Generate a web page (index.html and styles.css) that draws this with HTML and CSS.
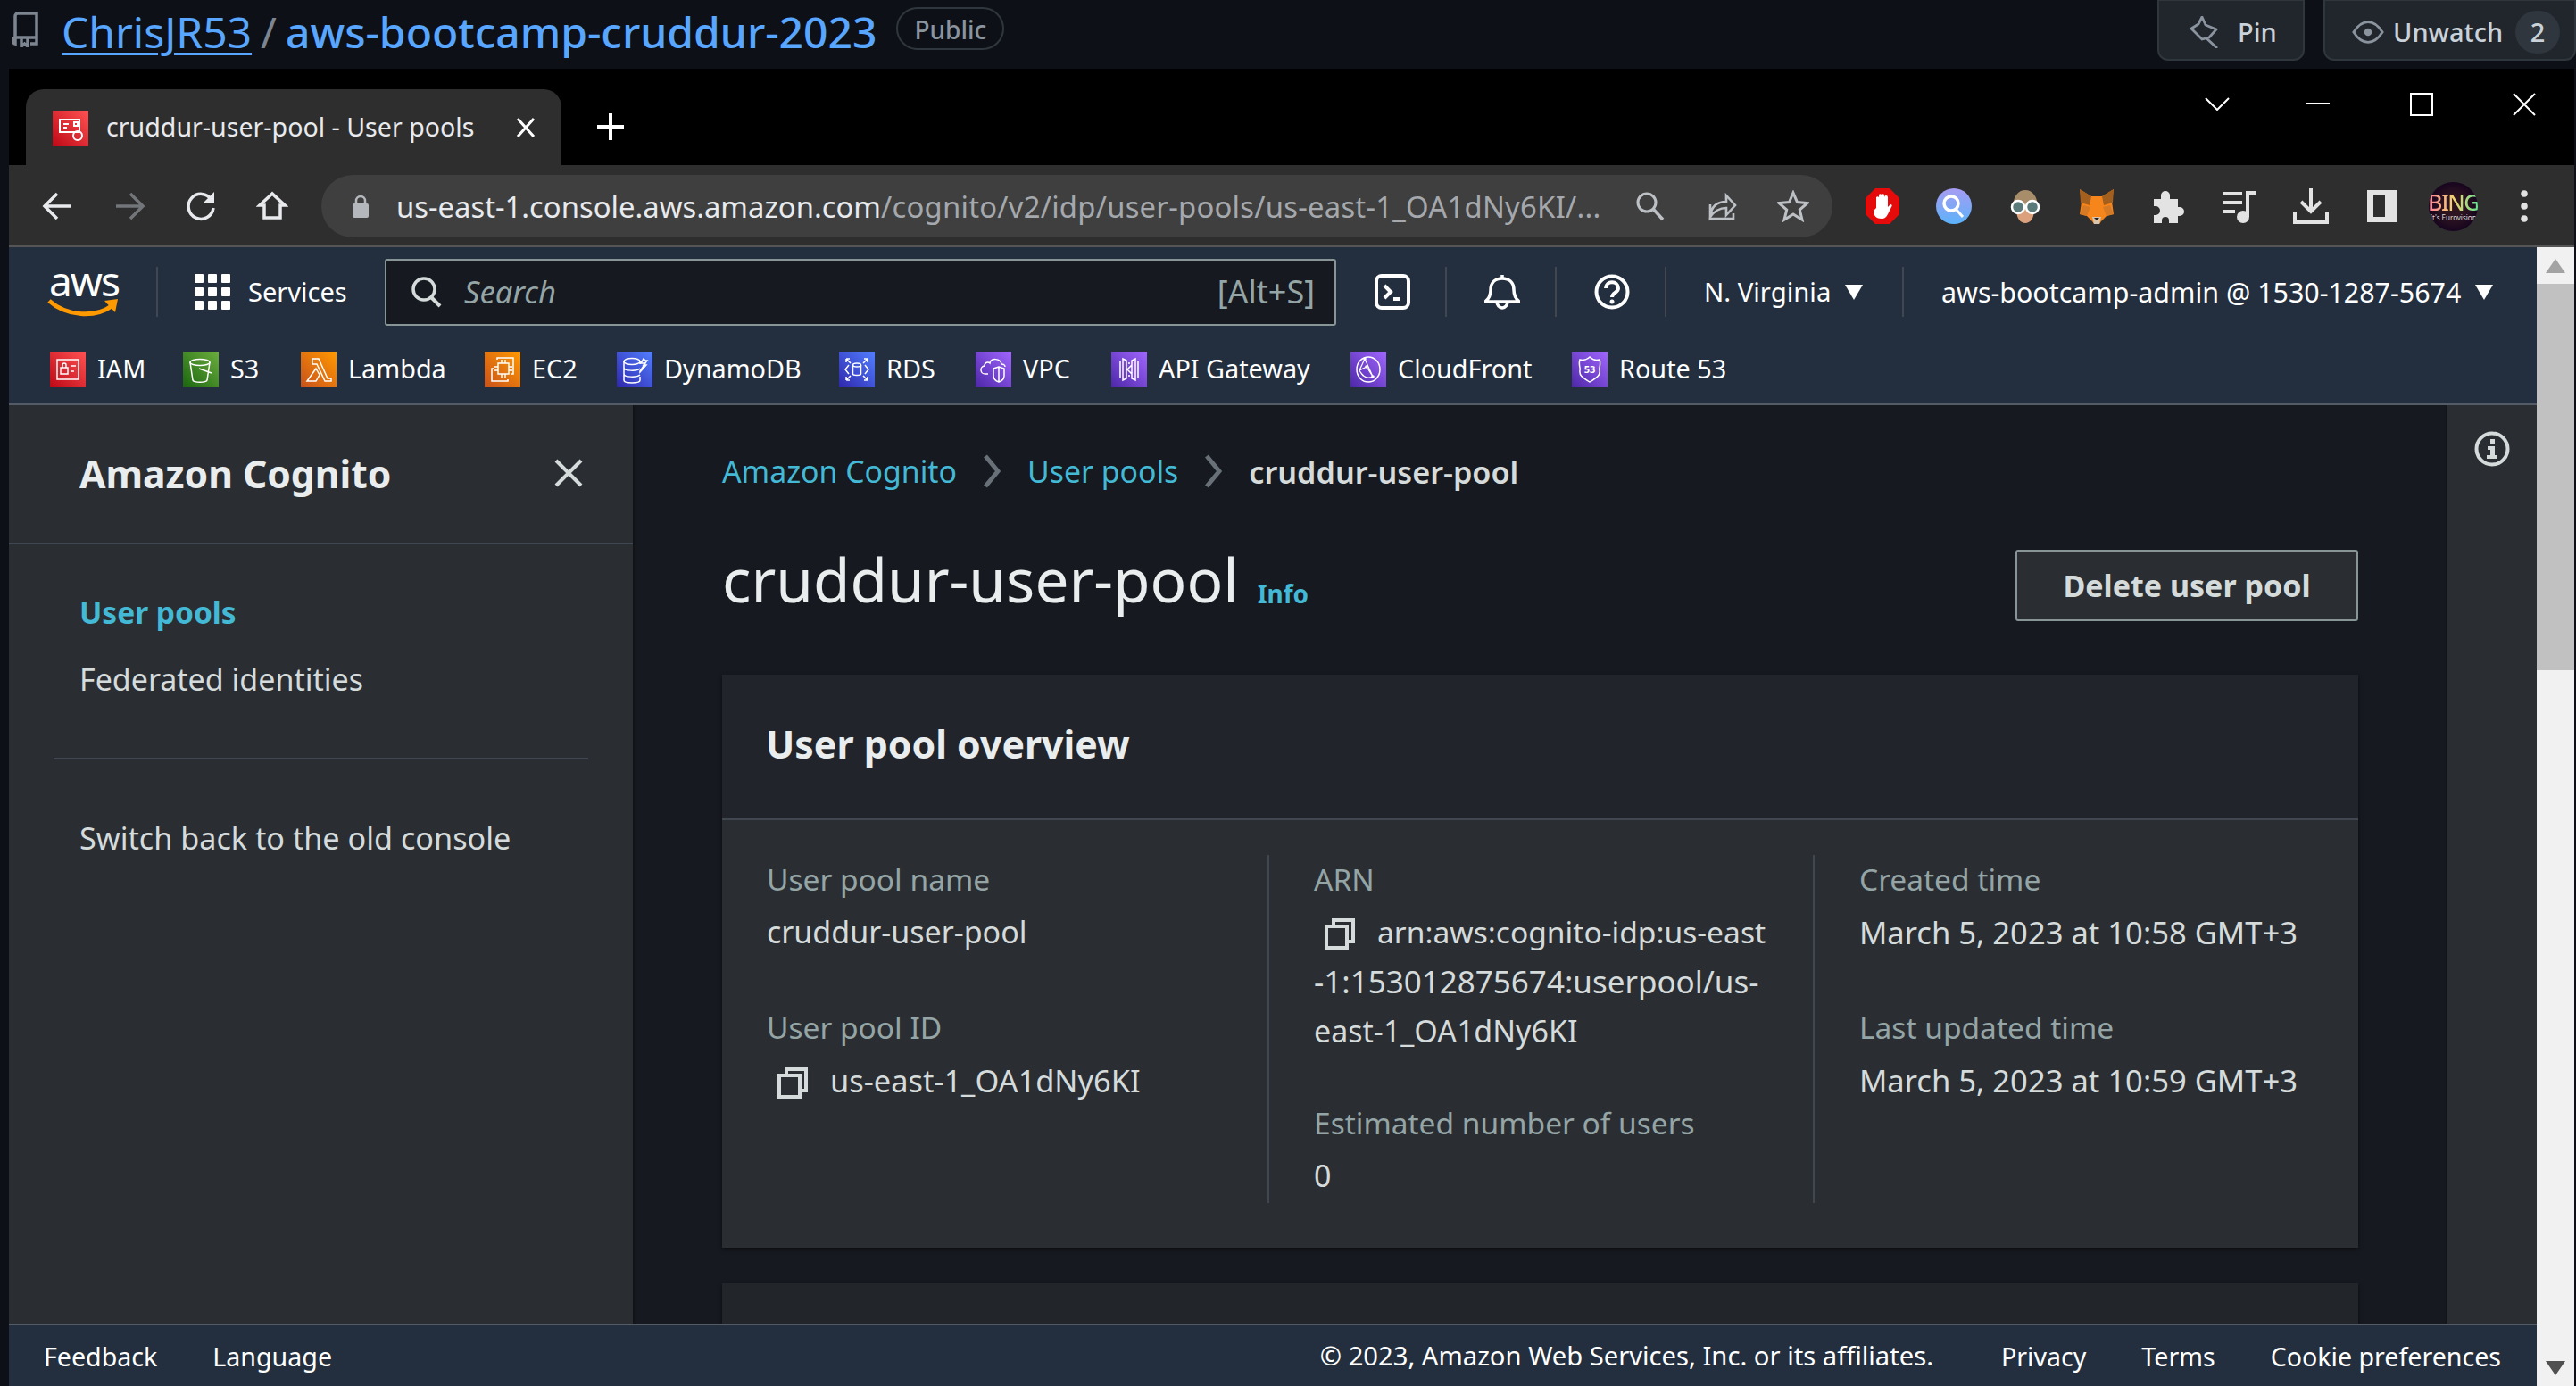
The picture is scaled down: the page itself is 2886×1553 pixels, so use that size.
FILE: index.html
```html
<!DOCTYPE html>
<html lang="en">
<head>
<meta charset="utf-8">
<title>cruddur-user-pool - User pools</title>
<link rel="stylesheet" href="styles.css">
</head>
<body>
<header class="gh">
  <svg class="gh-book" viewBox="0 0 30 40"><path d="M3 36V5a3 3 0 0 1 3-3h21v27H5a3 3 0 0 0-2 7zM27 29v7h-7M10 30v9l3.500-3 3.500 3v-9" fill="none" stroke="#7d8590" stroke-width="3.500"/></svg>
  <a class="gh-owner">ChrisJR53</a>
  <span class="gh-slash">/</span>
  <a class="gh-repo">aws-bootcamp-cruddur-2023</a>
  <span class="gh-public">Public</span>
  <div class="gh-actions">
    <div class="gh-btn gh-pin">
      <svg class="gh-ic" viewBox="0 0 36 36"><path d="M18 1l4 9 12 5-8 9-8 2L6 14l8-5zM22 24l13 12" fill="none" stroke="#8b949e" stroke-width="2.800"/></svg>
      <span>Pin</span>
    </div>
    <div class="gh-btn gh-watch">
      <svg class="gh-ic" viewBox="0 0 38 30"><path d="M2 15C7 7 12 3 19 3s12 4 17 12c-5 8-10 12-17 12S7 23 2 15z" fill="none" stroke="#8b949e" stroke-width="3"/><circle cx="19" cy="15" r="4.500" fill="#8b949e"/></svg>
      <span>Unwatch</span>
      <span class="gh-count">2</span>
    </div>
  </div>
</header>

<div class="window">
  <div class="titlebar">
    <div class="tab">
      <span class="tile tile-red tab-fav">
        <svg viewBox="0 0 40 40"><path d="M8 10h22v14H8zM12 15h6M12 19h4M24 13h4v4h-4z" fill="none" stroke="#fff" stroke-width="2"/><circle cx="28" cy="28" r="5" fill="none" stroke="#fff" stroke-width="2"/></svg>
      </span>
      <span class="tab-title">cruddur-user-pool - User pools</span>
      <svg class="tab-x" viewBox="0 0 22 24"><path d="M2 2l18 20M20 2L2 22" stroke="#fff" stroke-width="3"/></svg>
    </div>
    <svg class="tab-plus" viewBox="0 0 30 30"><path d="M15 0v30M0 15h30" stroke="#fff" stroke-width="4"/></svg>
    <div class="winctl">
      <svg class="wc wc-chev" viewBox="0 0 28 15"><path d="M1 1l13 13L27 1" fill="none" stroke="#fff" stroke-width="2"/></svg>
      <svg class="wc wc-min" viewBox="0 0 26 2"><path d="M0 1h26" stroke="#fff" stroke-width="2"/></svg>
      <svg class="wc wc-max" viewBox="0 0 26 26"><path d="M1 1h24v24H1z" fill="none" stroke="#fff" stroke-width="2"/></svg>
      <svg class="wc wc-close" viewBox="0 0 26 26"><path d="M1 1l24 24M25 1L1 25" stroke="#fff" stroke-width="2"/></svg>
    </div>
  </div>

  <div class="toolbar">
    <div class="tool-nav">
      <svg class="tb" viewBox="0 0 36 36"><path d="M33 18H4M17 4L3 18l14 14" fill="none" stroke="#e8eaed" stroke-width="3.500"/></svg>
      <svg class="tb" viewBox="0 0 36 36"><path d="M3 18h29M19 4l14 14-14 14" fill="none" stroke="#72767a" stroke-width="3.500"/></svg>
      <svg class="tb" viewBox="0 0 36 36"><path d="M30 11A14 14 0 1 0 32 20" fill="none" stroke="#e8eaed" stroke-width="3.500"/><path d="M33 2v12H21z" fill="#e8eaed"/></svg>
      <svg class="tb" viewBox="0 0 36 36"><path d="M18 4L4 17h5v14h18V17h5z" fill="none" stroke="#e8eaed" stroke-width="3.500"/></svg>
    </div>
    <div class="omnibox">
      <svg class="lock" viewBox="0 0 20 26"><path d="M5 11V7a5 5 0 0 1 10 0v4" fill="none" stroke="#b4b8bd" stroke-width="2.500"/><rect x="1" y="10" width="18" height="16" rx="2" fill="#b4b8bd"/></svg>
      <span class="url"><span class="url-host">us-east-1.console.aws.amazon.com</span><span class="url-path">/cognito/v2/idp/user-pools/us-east-1_OA1dNy6KI/...</span></span>
      <svg class="omni-ic" viewBox="0 0 36 36"><circle cx="14" cy="14" r="10" fill="none" stroke="#bdc1c6" stroke-width="3"/><path d="M21 21l11 12" stroke="#bdc1c6" stroke-width="3.500"/></svg>
      <svg class="omni-ic" viewBox="0 0 36 36"><path d="M5 16v16h26v-6M5 30c1-12 8-17 18-17V6l10 11-10 11v-8c-8 0-13 3-18 10z" fill="none" stroke="#bdc1c6" stroke-width="2.600"/></svg>
      <svg class="omni-ic" viewBox="0 0 36 36"><path d="M18 3l4.500 10.500 11.500 1-8.700 7.500 2.700 11.200L18 27l-10 6.200L10.700 22 2 14.500l11.500-1z" fill="none" stroke="#bdc1c6" stroke-width="3"/></svg>
    </div>
    <div class="exts">
      <svg class="ext" viewBox="0 0 40 40"><path d="M12 0h16l11 11v18L28 40H12L1 29V11z" fill="#e60b0b"/><path d="M13 22V10a2 2 0 0 1 3 0v-3a2 2 0 0 1 3 0 2 2 0 0 1 3 0v3a2 2 0 0 1 4 0v11l3-3c2 0 2 2 1 3l-4 8c-2 4-4 5-7 5-6 0-9-3-9-9z" fill="#fff"/></svg>
      <svg class="ext" viewBox="0 0 40 40"><defs><linearGradient id="gq" x1="0" y1="0" x2="0" y2="1"><stop offset="0" stop-color="#a79cf2"/><stop offset="1" stop-color="#5cb2fa"/></linearGradient></defs><circle cx="20" cy="20" r="20" fill="url(#gq)"/><circle cx="17" cy="17" r="8" fill="none" stroke="#fff" stroke-width="3.500"/><path d="M22 23l8 9" stroke="#fff" stroke-width="3"/></svg>
      <svg class="ext" viewBox="0 0 40 40"><path d="M6 22C6 9 12 2 20 2s14 7 14 20z" fill="#a88d6a"/><path d="M10 24c0-8 20-8 20 0 0 10-5 15-10 15S10 34 10 24z" fill="#dba07c"/><circle cx="12" cy="21" r="7" fill="#5b7a7a" stroke="#fff" stroke-width="2.500"/><circle cx="28" cy="21" r="7" fill="#5b7a7a" stroke="#fff" stroke-width="2.500"/></svg>
      <svg class="ext" viewBox="0 0 40 40"><path d="M1 1l13 8h12L39 1l-2 14 2 14-8 2-6 6-2 3h-6l-2-3-6-6-8-2 2-14z" fill="#f6851b"/><path d="M1 1l13 8-2 10-10-3zM39 1L26 9l2 10 10-3z" fill="#a35f1e"/><path d="M1 29l8 2 4-10-8-2zM39 29l-8 2-4-10 8-2z" fill="#d77a25"/><path d="M15 32h10l-2 8h-6z" fill="#d8c5b0"/><path d="M17 33h6l-3 3z" fill="#222"/></svg>
      <svg class="ext" viewBox="0 0 40 40"><path d="M4 12h8V8a5 5 0 0 1 10 0v4h9v9h2a5 5 0 0 1 0 10h-2v8H21v-3a4 4 0 0 0-8 0v3H4v-9h2a5 5 0 0 0 0-10H4z" fill="#e3e3e3"/></svg>
      <svg class="ext" viewBox="0 0 40 40"><path d="M1 6h22M1 16h22M1 26h14" stroke="#e3e3e3" stroke-width="4"/><path d="M29 32V5h9" fill="none" stroke="#e3e3e3" stroke-width="4"/><circle cx="24" cy="32" r="7" fill="#e3e3e3"/></svg>
      <svg class="ext" viewBox="0 0 40 40"><path d="M20 0v26M9 15l11 11 11-11" fill="none" stroke="#e3e3e3" stroke-width="4"/><path d="M2 26v12h36V26" fill="none" stroke="#e3e3e3" stroke-width="4"/></svg>
      <svg class="ext" viewBox="0 0 40 40"><path fill-rule="evenodd" d="M3 2h34v36H3zM10 8v24h13V8z" fill="#e3e3e3"/></svg>
      <span class="bing"><span class="bing-t">BING</span><span class="bing-s">It's Eurovision</span></span>
      <svg class="ext ext-dots" viewBox="0 0 40 40"><circle cx="20" cy="6" r="3.800" fill="#e3e3e3"/><circle cx="20" cy="20" r="3.800" fill="#e3e3e3"/><circle cx="20" cy="34" r="3.800" fill="#e3e3e3"/></svg>
    </div>
  </div>

  <div class="page">
    <div class="app">
      <nav class="nav">
        <div class="nav-top">
          <div class="logo">
            <span class="logo-t">aws</span>
            <svg class="logo-smile" viewBox="0 0 80 22"><path d="M2 4c20 18 52 19 70 6" fill="none" stroke="#ff9900" stroke-width="5"/><path d="M64 4l15-2-3 15z" fill="#ff9900"/></svg>
          </div>
          <span class="vdiv vdiv-logo"></span>
          <svg class="grid-ic" viewBox="0 0 40 40"><g fill="#fff"><rect width="10" height="10" rx="1"/><rect x="15" width="10" height="10" rx="1"/><rect x="30" width="10" height="10" rx="1"/><rect y="15" width="10" height="10" rx="1"/><rect x="15" y="15" width="10" height="10" rx="1"/><rect x="30" y="15" width="10" height="10" rx="1"/><rect y="30" width="10" height="10" rx="1"/><rect x="15" y="30" width="10" height="10" rx="1"/><rect x="30" y="30" width="10" height="10" rx="1"/></g></svg>
          <span class="nav-services">Services</span>
          <div class="search">
            <svg class="search-ic" viewBox="0 0 36 36"><circle cx="15" cy="15" r="12" fill="none" stroke="#d5dbdb" stroke-width="3.500"/><path d="M23 24l10 10" stroke="#d5dbdb" stroke-width="4"/></svg>
            <span class="search-ph">Search</span>
            <span class="search-key">[Alt+S]</span>
          </div>
          <svg class="nav-ic nav-shell" viewBox="0 0 40 40"><rect x="2" y="2" width="36" height="36" rx="6" fill="none" stroke="#fff" stroke-width="4"/><path d="M11 13l7 7-7 7M21 28h8" fill="none" stroke="#fff" stroke-width="4"/></svg>
          <span class="vdiv vdiv-a"></span>
          <svg class="nav-ic nav-bell" viewBox="0 0 40 40"><path d="M1 31c5-4 6-8 6-13C7 9 13 5 20 5s13 4 13 13c0 5 1 9 6 13z" fill="none" stroke="#fff" stroke-width="3.500" stroke-linejoin="round"/><path d="M14 31a6 7 0 0 0 12 0M20 1v4" fill="none" stroke="#fff" stroke-width="3.500"/></svg>
          <span class="vdiv vdiv-a"></span>
          <svg class="nav-ic nav-help" viewBox="0 0 40 40"><circle cx="20" cy="20" r="17.500" fill="none" stroke="#fff" stroke-width="4"/><path d="M13 16c0-9 14-9 14 0 0 5-7 5-7 10" fill="none" stroke="#fff" stroke-width="4"/><circle cx="20" cy="31" r="2.500" fill="#fff"/></svg>
          <span class="vdiv vdiv-a"></span>
          <span class="nav-region">N. Virginia</span>
          <span class="caret"></span>
          <span class="vdiv vdiv-b"></span>
          <span class="nav-account">aws-bootcamp-admin @ 1530-1287-5674</span>
          <span class="caret"></span>
        </div>
        <div class="favs">
          <span class="fav"><span class="tile tile-red"><svg viewBox="0 0 40 40"><path d="M8 9h24v22H8z" fill="none" stroke="#fff" stroke-width="1.500"/><rect x="12" y="18" width="8" height="7" fill="none" stroke="#fff" stroke-width="1.500"/><path d="M14 18v-3a2 2 0 0 1 4 0v3M23 16h6M23 22h4" fill="none" stroke="#fff" stroke-width="1.500"/></svg></span>IAM</span>
          <span class="fav"><span class="tile tile-green"><svg viewBox="0 0 40 40"><ellipse cx="19" cy="12" rx="11" ry="3.500" fill="none" stroke="#fff" stroke-width="1.500"/><path d="M8 12l3 20c1 3 15 3 16 0l3-20M18 19l14 5" fill="none" stroke="#fff" stroke-width="1.500"/></svg></span>S3</span>
          <span class="fav"><span class="tile tile-orange"><svg viewBox="0 0 40 40"><path d="M13 8h7l10 22h4v3h-7L18 14h-5zM17 19l4 7-4 7H7z" fill="none" stroke="#fff" stroke-width="1.500"/></svg></span>Lambda</span>
          <span class="fav"><span class="tile tile-orange"><svg viewBox="0 0 40 40"><rect x="15" y="13" width="12" height="12" fill="none" stroke="#fff" stroke-width="1.500"/><path d="M19 9v4M23 9v4M19 25v4M23 25v4M11 17h4M11 21h4M27 17h4M27 21h4M14 9V7h18v18h-2M26 31v2H8V19h3" fill="none" stroke="#fff" stroke-width="1.500"/></svg></span>EC2</span>
          <span class="fav"><span class="tile tile-blue"><svg viewBox="0 0 40 40"><ellipse cx="17" cy="11" rx="9" ry="3.500" fill="none" stroke="#fff" stroke-width="1.500"/><path d="M8 11v21c0 4 18 4 18 0v-4M8 18c0 4 15 4 18 1M8 25c0 4 15 4 18 1M26 11v3M26 22l6-9h-5l3-5 2 2h2l-4 5h3l-7 8z" fill="none" stroke="#fff" stroke-width="1.500"/></svg></span>DynamoDB</span>
          <span class="fav"><span class="tile tile-blue"><svg viewBox="0 0 40 40"><ellipse cx="20" cy="15" rx="4.500" ry="2" fill="none" stroke="#fff" stroke-width="1.500"/><path d="M15.500 15v10c0 2 9 2 9 0V15M11 15l-4 5 4 5M29 15l4 5-4 5M8 8l5 5M8 8v4M8 8h4M32 8l-5 5M32 8v4M32 8h-4M8 32l5-5M8 32v-4M8 32h4M32 32l-5-5M32 32v-4M32 32h-4" fill="none" stroke="#fff" stroke-width="1.500"/></svg></span>RDS</span>
          <span class="fav"><span class="tile tile-purple"><svg viewBox="0 0 40 40"><path d="M14 25H11a4.500 4.500 0 0 1-1-9c0-4 4-5 6-3 1-6 12-6 13 1 3 0 4 2 4 3" fill="none" stroke="#fff" stroke-width="1.500"/><path d="M20 19l6-2 6 2v8c0 4-3 6-6 7-3-1-6-3-6-7zM26 17v17" fill="none" stroke="#fff" stroke-width="1.500"/></svg></span>VPC</span>
          <span class="fav"><span class="tile tile-purple"><svg viewBox="0 0 40 40"><path d="M10 10v20M13 8v24l4-2V10zM27 8v24l-4-2V10zM30 10v20M19 13h2M19 27h2M23 15l-5 5 5 5" fill="none" stroke="#fff" stroke-width="1.500"/></svg></span>API Gateway</span>
          <span class="fav"><span class="tile tile-purple"><svg viewBox="0 0 40 40"><ellipse cx="20" cy="20" rx="13" ry="14" fill="none" stroke="#fff" stroke-width="1.500"/><path d="M16 8l-6 13 8-4 7 11M16 8l9 20M10 21c3 6 8 10 15 7" fill="none" stroke="#fff" stroke-width="1.200"/><circle cx="16" cy="8" r="1.800" fill="#fff"/><circle cx="18" cy="17" r="1.800" fill="#fff"/><circle cx="25" cy="28" r="1.800" fill="#fff"/></svg></span>CloudFront</span>
          <span class="fav"><span class="tile tile-purple"><svg viewBox="0 0 40 40"><path d="M9 9c4 1 8 0 11-3 3 3 7 4 11 3 2 6-1 9 0 12 1 7-5 9-11 13-6-4-12-6-11-13 1-3-2-6 0-12z" fill="none" stroke="#fff" stroke-width="1.500"/><text class="r53" x="20" y="24" text-anchor="middle">53</text></svg></span>Route 53</span>
        </div>
      </nav>

      <div class="middle">
        <aside class="side">
          <div class="side-head">
            <span class="side-title">Amazon Cognito</span>
            <svg class="side-x" viewBox="0 0 32 32"><path d="M2 2l28 28M30 2L2 30" stroke="#d5dbdb" stroke-width="4"/></svg>
          </div>
          <div class="side-links">
            <a class="side-active">User pools</a>
            <a class="side-link">Federated identities</a>
          </div>
          <hr class="side-hr">
          <a class="side-link side-old">Switch back to the old console</a>
        </aside>

        <main class="main">
          <div class="crumbs">
            <a class="crumb-link">Amazon Cognito</a>
            <svg class="crumb-sep" viewBox="0 0 20 38"><path d="M3 2l14 17L3 36" fill="none" stroke="#687078" stroke-width="5"/></svg>
            <a class="crumb-link">User pools</a>
            <svg class="crumb-sep" viewBox="0 0 20 38"><path d="M3 2l14 17L3 36" fill="none" stroke="#687078" stroke-width="5"/></svg>
            <span class="crumb-cur">cruddur-user-pool</span>
          </div>
          <div class="head">
            <h1 class="h-title">cruddur-user-pool</h1>
            <a class="h-info">Info</a>
            <button class="h-btn">Delete user pool</button>
          </div>
          <section class="card">
            <h2 class="card-head">User pool overview</h2>
            <div class="card-body">
              <div class="col">
                <div class="lbl">User pool name</div>
                <div class="val val-gap">cruddur-user-pool</div>
                <div class="lbl">User pool ID</div>
                <div class="val"><svg class="copy" viewBox="0 0 36 36"><path d="M11 10V3h22v24h-7" fill="none" stroke="#d5dbdb" stroke-width="4"/><path d="M3 10h23v24H3z" fill="none" stroke="#d5dbdb" stroke-width="4"/></svg><span class="val-id">us-east-1_OA1dNy6KI</span></div>
              </div>
              <div class="col">
                <div class="lbl">ARN</div>
                <div class="val val-gap-arn"><svg class="copy" viewBox="0 0 36 36"><path d="M11 10V3h22v24h-7" fill="none" stroke="#d5dbdb" stroke-width="4"/><path d="M3 10h23v24H3z" fill="none" stroke="#d5dbdb" stroke-width="4"/></svg><span class="val-arn">arn:aws:cognito-idp:us-east</span><br><span class="val-digits">-1:153012875674:userpool/us-</span><br>east-1_OA1dNy6KI</div>
                <div class="lbl">Estimated number of users</div>
                <div class="val">0</div>
              </div>
              <div class="col">
                <div class="lbl">Created time</div>
                <div class="val val-gap val-date">March 5, 2023 at 10:58 GMT+3</div>
                <div class="lbl">Last updated time</div>
                <div class="val val-date">March 5, 2023 at 10:59 GMT+3</div>
              </div>
            </div>
          </section>
          <section class="card card-next"></section>
        </main>

        <aside class="tools">
          <svg class="info-ic" viewBox="0 0 40 40"><circle cx="20" cy="20" r="17.500" fill="none" stroke="#d5dbdb" stroke-width="4"/><path d="M18 9h5v5h-5zM15 17h8v10h3v4H14v-4h4v-6h-3z" fill="#d5dbdb"/></svg>
        </aside>
      </div>

      <footer class="foot">
        <a>Feedback</a>
        <a>Language</a>
        <span class="foot-copy">© 2023, Amazon Web Services, Inc. or its affiliates.</span>
        <a>Privacy</a>
        <a>Terms</a>
        <a>Cookie preferences</a>
      </footer>
    </div>
    <div class="sb">
      <span class="sb-btn"><span class="sb-up"></span></span>
      <span class="sb-thumb"></span>
      <span class="sb-track"></span>
      <span class="sb-btn"><span class="sb-down"></span></span>
    </div>
  </div>
</div>
</body>
</html>
```
FILE: styles.css
```css
* { box-sizing: border-box; }
html, body { margin: 0; height: 100%; }
body {
  width: 2886px; height: 1553px; overflow: hidden;
  background: #0d1117; color: #fff;
  font-family: "Noto Sans", "Open Sans", sans-serif;
  display: flex; flex-direction: column;
}
svg { display: block; flex: none; }

/* GitHub strip */
.gh { height: 77px; display: flex; align-items: flex-start; position: relative; flex: none; }
.gh-book { width: 30px; height: 40px; margin: 13px 0 0 14px; }
.gh-owner { margin: 5px 0 0 25px; font-size: 48px; line-height: 62px; color: #58a6ff; text-decoration: underline; text-decoration-thickness: 3px; text-underline-offset: 5px; }
.gh-slash { margin: 5px 10px 0 10px; font-size: 48px; line-height: 62px; color: #7d8590; }
.gh-repo { margin-top: 5px; font-size: 48px; line-height: 62px; font-weight: 500; color: #58a6ff; }
.gh-public { margin: 8px 0 0 22px; height: 48px; padding: 2px 18px 0; border: 2px solid #30363d; border-radius: 24px; font-size: 28px; line-height: 42px; color: #8b949e; font-weight: 500; }
.gh-actions { margin-left: auto; display: flex; gap: 21px; }
.gh-btn { height: 69px; margin-top: -1px; padding-top: 4px; display: flex; align-items: center; background: #21262d; border: 2px solid #30363d; border-radius: 0 0 12px 12px; font-size: 29px; font-weight: 500; color: #c9d1d9; }
.gh-pin { width: 165px; padding-left: 30px; gap: 22px; }
.gh-watch { width: 283px; padding-left: 30px; }
.gh-ic { width: 36px; height: 36px; }
.gh-watch span:first-of-type { margin-left: 10px; }
.gh-count { margin-left: 14px; width: 50px; height: 48px; border-radius: 24px; background: #30363d; text-align: center; line-height: 48px; }

/* Browser window */
.window { flex: 1; min-height: 0; margin: 0 2px 0 10px; display: flex; flex-direction: column; }
.titlebar { height: 108px; background: #000; flex: none; display: flex; align-items: flex-start; position: relative; }
.tab { margin: 23px 0 0 19px; width: 600px; height: 85px; background: #2e2e2e; border-radius: 20px 20px 0 0; display: flex; align-items: center; padding: 0 0 0 30px; }
.tab-fav { margin-top: 2px; }
.tab-title { margin: -2px 0 0 20px; width: 459px; font-size: 28.600px; color: #e8eaed; }
.tab-x { width: 22px; height: 24px; }
.tab-plus { width: 30px; height: 30px; margin: 50px 0 0 40px; }
.winctl { margin-left: auto; margin-right: 43px; height: 108px; display: flex; align-items: flex-start; }
.wc { margin-top: 27px; }
.wc-chev { width: 28px; height: 15px; margin-top: 32px; }
.wc-min { width: 26px; height: 2px; margin: 38px 0 0 86px; }
.wc-max { width: 26px; height: 26px; margin-left: 90px; }
.wc-close { width: 26px; height: 26px; margin-left: 89px; }

.toolbar { height: 92px; flex: none; background: #2e2e2e; border-bottom: 2px solid #555; display: flex; align-items: center; padding-top: 2px; }
.tool-nav { width: 350px; padding-left: 37px; display: flex; gap: 44px; flex: none; }
.tb { width: 36px; height: 36px; }
.omnibox { width: 1693px; height: 70px; background: #3f3f3f; border-radius: 35px; display: flex; align-items: center; padding-left: 34px; flex: none; }
.lock { width: 20px; height: 26px; }
.url { margin-left: 30px; width: 1387px; font-size: 32.800px; white-space: nowrap; overflow: hidden; }
.url-host { color: #e8eaed; }
.url-path { color: #a5a9ae; letter-spacing: .25px; }
.omni-ic { width: 36px; height: 36px; margin-right: 44px; }
.omni-ic:last-child { margin-right: 0; }
.exts { margin-left: 36px; display: flex; align-items: center; gap: 40px; }
.ext { width: 40px; height: 40px; }
.bing { width: 55px; height: 55px; margin: 0 -8px; flex: none; border-radius: 50%; background: radial-gradient(circle, #2e1420 30%, #15041f 75%); display: flex; flex-direction: column; align-items: center; justify-content: center; overflow: hidden; }
.bing-t { font-size: 25px; line-height: 26px; font-weight: 500; letter-spacing: -1.500px; color: transparent; background: linear-gradient(90deg, #ff7fa0, #f2d56e 50%, #62e08e); -webkit-background-clip: text; background-clip: text; }
.bing-s { font-size: 8px; line-height: 10px; white-space: nowrap; color: #ddd; }

/* Page */
.page { flex: 1; min-height: 0; display: flex; }
.app { flex: 1; min-width: 0; display: flex; flex-direction: column; }

.nav { height: 177px; flex: none; background: #232f3e; border-bottom: 2px solid #545b64; }
.nav-top { height: 100px; display: flex; align-items: center; padding: 0 0 0 45px; font-size: 29px; }
.logo { width: 76px; height: 48px; position: relative; margin-top: -1px; }
.logo-t { display: block; margin-top: -7px; font-size: 46px; line-height: 36px; text-align: center; letter-spacing: -2px; color: #fff; }
.logo-smile { position: absolute; left: -2px; top: 30px; width: 80px; height: 22px; }
.vdiv { width: 2px; height: 56px; background: #414750; flex: none; }
.vdiv-logo { margin: 0 41px 0 44px; }
.grid-ic { width: 40px; height: 40px; }
.nav-services { margin: -2px 0 0 20px; width: 112px; white-space: nowrap; }
.search { margin-left: 41px; width: 1066px; height: 75px; background: #16191f; border: 2px solid #879596; border-radius: 3px; display: flex; align-items: center; padding: 0 22px 0 27px; }
.search-ic { width: 36px; height: 36px; }
.search-ph { margin: -2px 0 0 24px; font-style: italic; color: #95a5a6; font-size: 34.500px; }
.search-key { margin: -2px 0 0 auto; color: #95a5a6; font-size: 36px; }
.nav-ic { width: 40px; height: 40px; }
.nav-shell { margin-left: 43px; }
.vdiv-a { height: 56px; margin: 0 42px 0 39px; }
.nav-region { width: 142px; white-space: nowrap; font-size: 29.300px; }
.caret { width: 0; height: 0; border-left: 10px solid transparent; border-right: 10px solid transparent; border-top: 17px solid #fff; flex: none; margin-left: 16px; }
.vdiv-b { margin: 0 42px 0 44px; }
.nav-account { white-space: nowrap; font-size: 30.400px; }
.favs { height: 75px; display: flex; align-items: flex-start; padding-left: 46px; font-size: 28.800px; }
.fav { display: flex; align-items: center; height: 40px; margin-top: 15px; white-space: nowrap; }
.fav .tile { margin: 2px 13px -2px 0; }
.fav:nth-child(1) { width: 149px; }
.fav:nth-child(2) { width: 132px; }
.fav:nth-child(3) { width: 206px; }
.fav:nth-child(4) { width: 148px; }
.fav:nth-child(5) { width: 249px; }
.fav:nth-child(6) { width: 153px; }
.fav:nth-child(7) { width: 152px; }
.fav:nth-child(8) { width: 268px; }
.fav:nth-child(9) { width: 248px; }
.tile { width: 40px; height: 40px; flex: none; display: block; }
.tile svg { width: 40px; height: 40px; }
.r53 { font: 700 11px "Noto Sans", sans-serif; fill: #fff; }
.tile-red { background: linear-gradient(45deg, #bd0816, #ff5252); }
.tile-green { background: linear-gradient(45deg, #1b660f, #6cae3e); }
.tile-orange { background: linear-gradient(45deg, #c8511b, #ff9900); }
.tile-blue { background: linear-gradient(45deg, #2e27ad, #527fff); }
.tile-purple { background: linear-gradient(45deg, #4d27a8, #a166ff); }

.middle { flex: 1; min-height: 0; display: flex; background: #16191f; overflow: hidden; }
.side { width: 699px; flex: none; background: #2a2e33; box-shadow: 1px 0 2px #111; }
.side-head { height: 156px; border-bottom: 2px solid #414750; display: flex; align-items: center; justify-content: space-between; padding: 0 56px 2px 79px; }
.side-title { font-size: 42.600px; font-weight: 700; color: #eaeded; }
.side-x { width: 32px; height: 32px; }
.side-links { padding: 57px 0 0 79px; display: flex; flex-direction: column; gap: 37px; }
.side-active { font-size: 33.500px; line-height: 38px; font-weight: 700; color: #44b9d6; }
.side-link { font-size: 34px; line-height: 38px; color: #d5dbdb; }
.side-hr { margin: 69px 50px 0 50px; border: 0; border-top: 2px solid #414750; }
.side-old { display: block; margin: 69px 0 0 79px; font-size: 34.200px; }

.main { flex: 1; min-width: 0; padding: 55px 100px 0 100px; }
.crumbs { display: flex; align-items: center; height: 38px; font-size: 33.800px; white-space: nowrap; }
.crumb-link { color: #44b9d6; }
.crumb-sep { width: 20px; height: 38px; margin: 0 30px 0 29px; }
.crumb-cur { font-weight: 600; font-size: 34.200px; color: #d5dbdb; }
.head { display: flex; align-items: center; margin-top: 65px; height: 88px; }
.h-title { margin: 0 0 14px; font-size: 67.500px; line-height: 88px; font-weight: 400; color: #eaeded; white-space: nowrap; }
.h-info { margin: 18px 0 0 21px; font-size: 28px; font-weight: 700; color: #44b9d6; }
.h-btn { margin: 0 0 0 auto; width: 384px; height: 80px; background: #2a2e33; border: 2px solid #879596; border-radius: 3px; color: #d5dbdb; font: 700 34px "Noto Sans", sans-serif; padding: 0; }
.card { margin-top: 56px; background: #2a2e33; box-shadow: 0 2px 4px rgba(0,0,0,.5); }
.card-head { margin: 0; height: 163px; padding: 0 49px 6px; display: flex; align-items: center; background: #21252b; border-bottom: 2px solid #414750; font-size: 42.800px; font-weight: 700; color: #eaeded; }
.card-body { height: 479px; padding: 39px 50px 0; display: grid; grid-template-columns: 563px 611px 1fr; }
.col { height: 390px; border-right: 2px solid #414750; }
.col + .col { padding-left: 50px; }
.col:last-child { border-right: 0; }
.lbl { font-size: 33.500px; line-height: 55px; color: #95a5a6; white-space: nowrap; }
.val { margin-top: 4px; font-size: 34px; line-height: 55px; color: #d5dbdb; white-space: nowrap; }
.val-gap { margin-bottom: 52px; }
.val-gap-arn { margin-bottom: 48px; }
.val-date { font-size: 34.600px; }
.val-id { font-size: 34.400px; }
.val-arn { font-size: 33.600px; }
.val-digits { font-size: 35px; }
.copy { display: inline-block; width: 36px; height: 36px; margin: 0 24px 0 11px; vertical-align: -7px; }
.card-next { margin-top: 40px; height: 200px; background: #22252a; }

.tools { width: 100px; flex: none; background: #2a2e33; box-shadow: -1px 0 2px #111; padding: 29px 0 0 30px; }
.info-ic { width: 40px; height: 40px; }

.foot { height: 70px; flex: none; background: #232f3e; border-top: 2px solid #545b64; display: flex; align-items: center; padding: 0 40px 0 39px; font-size: 28.600px; white-space: nowrap; }
.foot a + a { margin-left: 62px; }
.foot-copy { margin-left: auto; margin-right: 76px; font-size: 29.200px; }

.sb { width: 42px; flex: none; background: #f1f1f1; display: flex; flex-direction: column; }
.sb-btn { height: 41px; display: flex; align-items: center; justify-content: center; flex: none; }
.sb-up { border-left: 11px solid transparent; border-right: 11px solid transparent; border-bottom: 16px solid #a3a3a3; }
.sb-down { border-left: 11px solid transparent; border-right: 11px solid transparent; border-top: 16px solid #505050; }
.sb-thumb { height: 433px; background: #c1c1c1; flex: none; }
.sb-track { flex: 1; }
```
